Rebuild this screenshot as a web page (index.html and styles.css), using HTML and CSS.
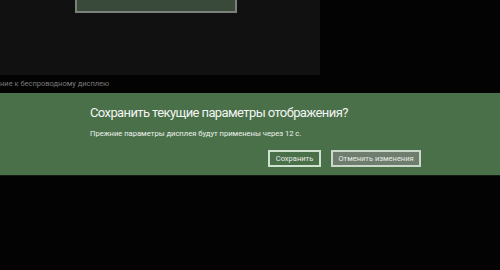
FILE: index.html
```html
<!DOCTYPE html>
<html lang="ru">
<head>
    <meta charset="UTF-8">
    <title>Параметры дисплея</title>
    <link rel="stylesheet" href="styles.css">
</head>
<body>

    <!-- Display preview -->
    <div class="preview">
        <div class="screen"></div>
    </div>
    <div class="caption">ние к беспроводному дисплею</div>

    <!-- Confirm banner -->
    <div class="banner">
        <div class="dialog">
            <h1>Сохранить текущие параметры отображения?</h1>
            <p>Прежние параметры дисплея будут применены через 12 с.</p>
            <div class="actions">
                <button class="btn btn-save">Сохранить</button>
                <button class="btn btn-revert">Отменить изменения</button>
            </div>
        </div>
    </div>

</body>
</html>
```

FILE: styles.css
```css
* {
    margin: 0;
    padding: 0;
    box-sizing: border-box;
}

body {
    font-family: Roboto, "Noto Sans", sans-serif;
    background-color: #030303;
    color: white;
    height: 270px;
    overflow: hidden;
}

/* Preview panel */
.preview {
    width: 320px;
    height: 75px;
    background-color: #111;
    padding-left: 75px;
}

.screen {
    width: 162px;
    height: 13px;
    background-color: #3a4a3a;
    border: 2px solid #7b807b;
    border-top: none;
}

.caption {
    height: 18px;
    line-height: 18px;
    font-size: 7.5px;
    color: #7a7a7a;
    white-space: nowrap;
}

/* Banner */
.banner {
    height: 83px;
    background-color: #4a7049;
    border-bottom: 1px solid #161a16;
    padding: 10px 0 0 90px;
}

.dialog {
    width: 331px;
}

.dialog h1 {
    font-size: 13px;
    font-weight: normal;
    letter-spacing: -0.6px;
    line-height: 20px;
    color: #f2f5f2;
    white-space: nowrap;
}

.dialog p {
    font-size: 7.6px;
    line-height: 12px;
    margin-top: 5px;
    color: #eef2ee;
    white-space: nowrap;
}

.actions {
    display: flex;
    justify-content: flex-end;
    gap: 10px;
    margin-top: 10px;
}

.btn {
    font-family: inherit;
    font-size: 7.5px;
    height: 17px;
    padding: 0;
    white-space: nowrap;
    color: #e6ece6;
    background-color: #4a7049;
    border: 2px solid #cfe2cf;
}

.btn-save {
    width: 53px;
}

.btn-revert {
    width: 90px;
    background-color: #6f7d6e;
    border-color: #c9d8c9;
}
```
